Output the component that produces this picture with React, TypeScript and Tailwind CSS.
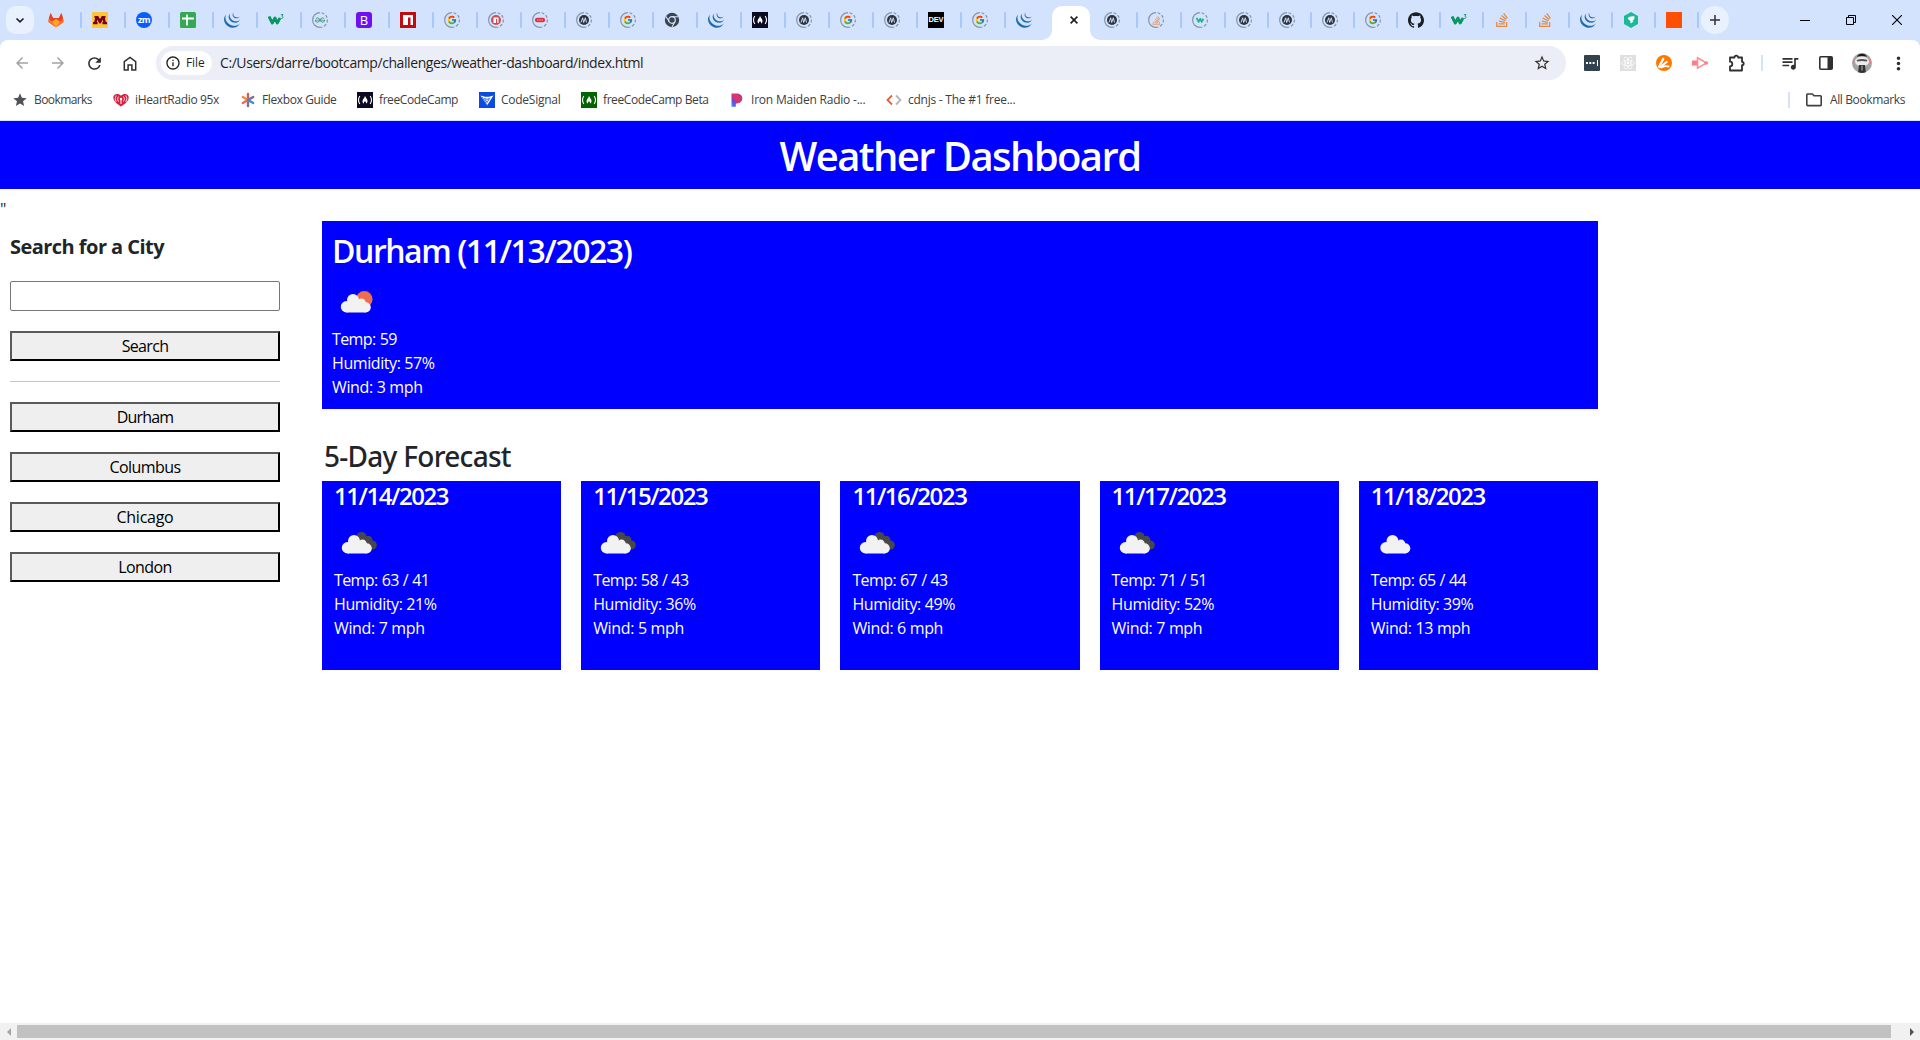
import React from 'react';
import type { ReactNode } from 'react';
import {
  SiGithub,
  SiJquery,
  SiStackoverflow,
  SiGeeksforgeeks,
  SiReact,
} from 'react-icons/si';
import { FcGoogle } from 'react-icons/fc';
import {
  MdArrowBack,
  MdArrowForward,
  MdRefresh,
  MdInfoOutline,
  MdStarBorder,
  MdStar,
  MdMoreVert,
  MdQueueMusic,
} from 'react-icons/md';

/* ---------- favicons ---------- */

const Jquery = () => <SiJquery className="size-4 text-[#1f6cae]" />;

const Gitlab = () => (
  <svg viewBox="0 0 16 16" className="size-4">
    <path d="M2.6 1 5 6h6l2.4-5 2.3 7.2c.3 1-.1 2-.8 2.6L8 15.6 1.1 10.8A2.4 2.4 0 0 1 .3 8.2Z" fill="#fc6d26" />
    <path d="M2.6 1 5 6h6l2.4-5 1.7 5.5L8 13 .9 6.5Z" fill="#e24329" />
    <path d="m4 9.8 4-3 4 3-4 5.8Z" fill="#fca326" />
  </svg>
);

const Minnesota = () => (
  <svg viewBox="0 0 16 16" className="size-4">
    <path d="M0 0h16v16H0z" fill="#fdc53a" />
    <path d="M2.5 4h3.700L8 7l1.800-3h3.700v2h-.6l.9 4h1.200v2.300h-4.600V10h.8l-.4-2.200L8.600 11.500H7.400L5.200 7.800 4.800 10h.8v2.300H1V10h1.200l.9-4h-.6Z" fill="#7a0019" />
  </svg>
);

const Zoom = () => (
  <span className="grid size-4 place-items-center rounded-full bg-[#0b5cff] pb-0.5 text-[9px] leading-none font-bold tracking-[-0.5px] text-white">
    zm
  </span>
);

const Sheets = () => (
  <svg viewBox="0 0 16 16" className="size-4">
    <rect width="16" height="16" rx="1.5" fill="#34a853" />
    <path d="M7 2.500v11M2 6.500h12" stroke="#fff" strokeWidth="1.8" />
  </svg>
);

const WMark = ({ color }: { color: string }) => (
  <path d="M1 4.500 4.300 11 7 6l2.200 5L12 6" fill="none" stroke={color} strokeWidth="2.900" strokeLinejoin="round" />
);

const W3 = () => (
  <svg viewBox="0 0 16 16" className="size-4">
    <WMark color="#059862" />
    <path d="M12.900 2.600h2.100L13.900 4.200c1.500 0 1.400 2.200-.1 2.200-.6 0-1-.2-1.200-.6" fill="none" stroke="#059862" strokeWidth=".9" />
  </svg>
);

const Bootstrap = () => (
  <span className="grid size-4 place-items-center rounded-[3px] bg-[#6f10f2] text-[13px] leading-none text-white">B</span>
);

const Npm = () => (
  <svg viewBox="0 0 16 16" className="size-4">
    <path d="M0 0h16v16H0z" fill="#c10b0f" />
    <path d="M3 3h10v10h-2.500V5.500H8V13H3Z" fill="#fff" />
  </svg>
);

const Chrome = () => (
  <svg viewBox="0 0 16 16" className="size-4">
    <circle cx="8" cy="8" r="7.200" fill="#3c4450" />
    <circle cx="8" cy="8" r="3.300" fill="#3c4450" stroke="#d3e3fd" strokeWidth="1.200" />
    <path d="M8 4.700h6.200M5.200 9.700 2 4.500M10.900 9.700 8 15" stroke="#d3e3fd" strokeWidth="1.100" />
  </svg>
);

const Fcc = ({ className }: { className: string }) => (
  <span className={className}>
    <svg viewBox="0 0 16 16" className="size-4">
      <path d="M2.800 4q-2.600 4 0 8M13.200 4q2.600 4 0 8" fill="none" stroke="#fff" strokeWidth="1.100" />
      <path d="M8 3.800c.3 1.700 2.500 2.900 2.500 5.200 0 1.400-.7 2.200-1.500 2.600.4-1.200-.3-1.600-1-2.600-.6 1-1.500 1.400-1 2.600C6 11.200 5.500 10.300 5.500 9.200 5.500 7.400 7.800 6 8 3.800Z" fill="#fff" />
    </svg>
  </span>
);

const Dev = () => (
  <span className="grid size-4 place-items-center bg-black font-['Liberation_Sans'] text-[7.5px] leading-none font-bold tracking-[-0.2px] text-white">
    DEV
  </span>
);

const Stack = () => <SiStackoverflow className="size-3.5 text-[#e08a4a]" />;

const Hex = () => (
  <svg viewBox="0 0 16 16" className="size-4">
    <path d="M8 0 15 4v8l-7 4-7-4V4Z" fill="#1cb997" />
    <path d="M4.500 6.500c1.500-2 4.500-2.500 7-2 .3 2-.5 3.500-2 4l1 1L7.700 11.500l-.4-2.500Z" fill="#fff" />
  </svg>
);

const Orange = () => <span className="block size-4 bg-[#ff4f00]" />;

const Github = () => <SiGithub className="size-4 text-[#1b1f24]" />;

/* Ring drawn around the favicon of an inactive, unloaded tab. */
const Ring = ({ children }: { children: ReactNode }) => (
  <span className="relative grid size-4 place-items-center">
    <svg viewBox="0 0 16 16" className="absolute inset-0 size-4">
      <path d="M8 .6a7.400 7.400 0 0 0 0 14.800" fill="none" stroke="#8695a8" strokeWidth="1.200" />
      <path d="M8 .6a7.400 7.400 0 0 1 0 14.800" fill="none" stroke="#8695a8" strokeWidth="1.200" strokeDasharray="3 1.800" strokeDashoffset="-1.500" />
    </svg>
    {children}
  </span>
);

const RingG = () => <Ring><FcGoogle className="size-2.5" /></Ring>;
const RingM = () => (
  <Ring>
    <svg viewBox="0 0 10 10" className="size-2.5">
      <circle cx="5" cy="5" r="5" fill="#2b3442" />
      <path d="M2 7.500 3.700 2.800l1 4.700 1.600-4.700 1.200 4.700" fill="none" stroke="#dfe8f5" strokeWidth=".9" />
    </svg>
  </Ring>
);
const RingGfg = () => <Ring><SiGeeksforgeeks className="size-2.5 text-[#3f9a72]" /></Ring>;
const RingNpm = () => (
  <Ring>
    <svg viewBox="0 0 10 10" className="size-2.5">
      <circle cx="5" cy="5" r="5" fill="#d04a55" />
      <path d="M2.500 2.500h5V8H6.200V4H5v4H2.500Z" fill="#fff" />
    </svg>
  </Ring>
);
const RingRed = () => (
  <Ring>
    <svg viewBox="0 0 10 10" className="size-2.5">
      <rect y="2.800" width="10" height="4.400" rx="2" fill="#d9343f" />
      <path d="M2 5h6" stroke="#f4a9ad" strokeWidth=".9" strokeDasharray="1.200 .4" />
    </svg>
  </Ring>
);
const RingStack = () => <Ring><SiStackoverflow className="size-[9px] text-[#ee9a66]" /></Ring>;
const RingW = () => (
  <Ring>
    <svg viewBox="0 0 13 16" className="size-2.5"><WMark color="#27b089" /></svg>
  </Ring>
);
const DarkFcc = () => <Fcc className="block size-4 bg-[#0a0a23]" />;

const leftTabs = [
  Gitlab, Minnesota, Zoom, Sheets, Jquery, W3, RingGfg, Bootstrap, Npm, RingG, RingNpm, RingRed,
  RingM, RingG, Chrome, Jquery, DarkFcc, RingM, RingG, RingM, Dev, RingG, Jquery,
];
const midTabs = [RingM, RingStack, RingW];
const rightTabs = [RingM, RingM, RingM, RingG, Github, W3, Stack, Stack, Jquery, Hex, Orange];

function Tab({ icon: Icon, narrow, last }: { icon: () => ReactNode; narrow?: boolean; last?: boolean }) {
  return (
    <div className={`flex h-10 shrink-0 items-center justify-between pl-2.5 ${narrow ? 'w-[43px]' : 'w-11'}`}>
      <span className="grid size-4 place-items-center"><Icon /></span>
      {!last && <span className="h-4 w-0.5 rounded-full bg-[#a8c7fa]" />}
    </div>
  );
}

function TabStrip() {
  return (
    <div className="flex h-10 items-center bg-[#d3e3fd]">
      <div className="ml-1.5 mr-1 grid size-7 shrink-0 place-items-center rounded-[10px] bg-[#e9f1fe]">
        <svg viewBox="0 0 10 10" className="size-2.5"><path d="m1.500 3.500 3.500 3.300 3.500-3.300" fill="none" stroke="#1f1f1f" strokeWidth="1.700" /></svg>
      </div>
      {leftTabs.map((icon, i) => <Tab key={i} icon={icon} last={i === leftTabs.length - 1} />)}
      <div className="relative flex h-10 w-11 shrink-0 items-end pl-0.5">
        <div className="flex h-[34px] w-[38px] rounded-t-[10px] bg-white pt-2.5 pl-[18px]">
          <svg viewBox="0 0 8 8" className="size-2"><path d="m.6.6 6.800 6.800M7.400.6.6 7.400" stroke="#1f1f1f" strokeWidth="1.600" /></svg>
        </div>
        <svg viewBox="0 0 10 10" className="absolute bottom-0 -left-2 size-2.5"><path d="M10 0v10H0A10 10 0 0 0 10 0Z" fill="#fff" /></svg>
        <svg viewBox="0 0 10 10" className="absolute bottom-0 left-10 size-2.5"><path d="M0 0v10h10A10 10 0 0 1 0 0Z" fill="#fff" /></svg>
      </div>
      {midTabs.map((icon, i) => <Tab key={i} icon={icon} />)}
      {rightTabs.map((icon, i) => <Tab key={i} icon={icon} narrow />)}
      <div className="ml-0.5 grid size-7 shrink-0 place-items-center rounded-full bg-[#e9f1fe]">
        <svg viewBox="0 0 10 10" className="size-2.5"><path d="M5 0v10M0 5h10" stroke="#303030" strokeWidth="1.500" /></svg>
      </div>
      <div className="flex flex-1 items-center justify-end gap-9 pr-[18px]">
        <svg viewBox="0 0 10 10" className="size-2.5"><path d="M0 5.500h10" stroke="#000" /></svg>
        <svg viewBox="0 0 10 10" className="size-2.5"><path d="M.5 2.500h7v7h-7zM2.500 2.500v-2h7v7h-2" fill="none" stroke="#000" /></svg>
        <svg viewBox="0 0 10 10" className="size-2.5"><path d="m0 0 10 10M10 0 0 10" stroke="#000" strokeWidth="1.100" /></svg>
      </div>
    </div>
  );
}

function Slot({ children, className = 'w-9' }: { children: ReactNode; className?: string }) {
  return <span className={`grid shrink-0 place-items-center ${className}`}>{children}</span>;
}

function Toolbar() {
  return (
    <div className="bg-[#d3e3fd]">
      <div className="flex h-[46px] items-center rounded-t-lg bg-white text-[#3c4043]">
        <div className="flex w-[156px] items-center pl-1">
          <Slot><MdArrowBack className="size-[18px] text-[#a3a3a3]" /></Slot>
          <Slot><MdArrowForward className="size-[18px] text-[#a3a3a3]" /></Slot>
          <Slot><MdRefresh className="size-[19px] text-[#303030]" /></Slot>
          <Slot>
            <svg viewBox="0 0 14 15" className="h-[15px] w-3.5"><path d="M1.300 5.600 7 1.400l5.700 4.200V14H8.900V9H5.100v5H1.300Z" fill="none" stroke="#303030" strokeWidth="1.500" /></svg>
          </Slot>
        </div>
        <div className="flex h-[34px] w-[1410px] items-center rounded-full bg-[#ebeef7] pl-[5px]">
          <div className="flex h-6 w-[51px] items-center rounded-full bg-white pl-1 text-xs text-[#1f1f1f]">
            <MdInfoOutline className="size-4 shrink-0" />
            <span className="ml-[5px] tracking-[-0.1px]">File</span>
          </div>
          <span className="ml-2 flex-1 text-sm tracking-[-0.42px] text-[#1f1f1f]">
            C:/Users/darre/bootcamp/challenges/weather-dashboard/index.html
          </span>
          <MdStarBorder className="mr-[15px] size-[18px] text-[#303030]" />
        </div>
        <div className="flex flex-1 items-center pl-2">
          <Slot>
            <svg viewBox="0 0 16 16" className="size-4"><rect width="16" height="16" rx="1" fill="#32424f" /><path d="M2 8h9" stroke="#fff" strokeWidth="2" strokeDasharray="2 1.300" /><path d="M13.500 5v6" stroke="#fff" strokeWidth="1" /></svg>
          </Slot>
          <Slot><span className="grid size-4 place-items-center bg-[#dfdfdf]"><SiReact className="size-3.5 text-white" /></span></Slot>
          <Slot>
            <svg viewBox="0 0 16 16" className="size-4">
              <circle cx="8" cy="8" r="8" fill="#ff7800" />
              <g stroke="#fff" strokeLinecap="round" fill="none">
                <path d="M3.200 11.800 7.200 4" strokeWidth="2.400" />
                <path d="M4.500 12 10.600 7" strokeWidth="2.200" />
                <path d="M5.500 12.300q4-1.800 7-.8" strokeWidth="1.900" />
              </g>
            </svg>
          </Slot>
          <Slot>
            <svg viewBox="0 0 16 14" className="h-3.5 w-4"><path d="M0 4.500h5v5H0z" fill="#ff7b85" /><path d="M5.500 1.800 14.500 7l-9 5.200Z" fill="none" stroke="#ff8d95" strokeWidth="1.600" /><circle cx="14.200" cy="7" r="1.800" fill="#ff7b85" /></svg>
          </Slot>
          <Slot className="w-[38px]">
            <svg viewBox="0 0 18 18" className="size-[18px]"><path d="M2 3.500h4.500a1.800 1.800 0 0 1 3.600 0H14v4.300a1.700 1.700 0 0 1 0 3.400v5.300H2v-4.200a2.300 2.300 0 0 0 0-4.600Z" fill="none" stroke="#303030" strokeWidth="1.800" strokeLinejoin="round" /></svg>
          </Slot>
          <span className="ml-[5px] mr-[9px] h-4 w-0.5 bg-[#d3e3fd]" />
          <Slot><MdQueueMusic className="size-5 text-[#303030]" /></Slot>
          <Slot>
            <svg viewBox="0 0 14 14" className="size-3.5"><rect x=".8" y=".8" width="12.400" height="12.400" rx="1" fill="none" stroke="#303030" strokeWidth="1.600" /><path d="M8.500 1H13v12H8.500Z" fill="#303030" /></svg>
          </Slot>
          <Slot>
            <svg viewBox="0 0 20 20" className="size-5">
              <circle cx="10" cy="10" r="10" fill="#a3a3a3" />
              <ellipse cx="10" cy="8.500" rx="7" ry="5" fill="#ececec" />
              <path d="M5 3.800Q6.500.6 10 .8q3.500-.2 5 3-5-1.400-10 0Z" fill="#1a1a1a" />
              <path d="M4.500 7q5.500-1.800 11 0l-.8 1.500q-4.700-1-9.400 0Z" fill="#555" />
              <path d="M1.800 6.500q-.8 2 0 4M18.200 6.500q.8 2 0 4" fill="none" stroke="#f27b86" strokeWidth="1.300" />
              <path d="M7 12h6l.8 7.200a10 10 0 0 1-7.600 0Z" fill="#333" />
              <path d="M10 12.500v5" stroke="#bbb" />
            </svg>
          </Slot>
          <Slot><MdMoreVert className="size-[21px] text-[#303030]" /></Slot>
        </div>
      </div>
    </div>
  );
}

/* ---------- bookmarks ---------- */

const Heart = () => (
  <svg viewBox="0 0 16 16" className="size-4">
    <path d="M8 14.500C4 12 .3 9 .3 5.500.3 1.500 5.500.8 8 3.800c2.500-3 7.700-2.300 7.700 1.700 0 3.500-3.700 6.500-7.700 9Z" fill="#d6203f" />
    <path d="M5.500 4.500Q3.500 7 5.500 9.500M3.200 3.500Q1 6.500 3.200 10M10.500 4.500Q12.500 7 10.500 9.500M12.800 3.500q2.200 3 0 6.500" fill="none" stroke="#fff" strokeWidth=".8" />
    <circle cx="8" cy="7" r="1.200" fill="#fff" /><path d="M8 8v4" stroke="#fff" strokeWidth="1" />
  </svg>
);
const Asterisk = () => (
  <svg viewBox="0 0 16 16" className="size-4" fill="none" strokeWidth="2.400" strokeLinecap="round">
    <path d="M8 2v6" stroke="#e0574f" /><path d="M8 8v6" stroke="#8a6a86" />
    <path d="M8 8 2.800 5" stroke="#f08a4b" /><path d="m8 8 5.200-3" stroke="#7b6d9a" />
    <path d="m8 8-5.200 3" stroke="#ee6b4d" /><path d="m8 8 5.200 3" stroke="#3f8fc4" />
  </svg>
);
const CodeSignal = () => (
  <svg viewBox="0 0 16 16" className="size-4">
    <path d="M0 0h16v16H0z" fill="#0a4be0" />
    <path d="M1.500 3.500 6 4.800h4l4.500-1.300L8 13.500Z" fill="#fff" /><path d="m5.500 6.500 2.500.8 2.500-.8L8 10.500ZM3 5l5 8" fill="none" stroke="#0a4be0" strokeWidth=".8" />
  </svg>
);
const Pandora = () => (
  <svg viewBox="0 0 16 16" className="size-4">
    <defs><linearGradient id="pandora" x1="0" y1="1" x2="1" y2="0"><stop offset="0" stopColor="#2b9bf0" /><stop offset=".3" stopColor="#6a4bd8" /><stop offset=".5" stopColor="#e8305f" /><stop offset=".7" stopColor="#d8356f" /><stop offset="1" stopColor="#5b3df0" /></linearGradient></defs>
    <path d="M2.500 1.500H7.500c8 0 7.500 9.900.5 9.900H6.800v3.400H2.500Z" fill="url(#pandora)" />
  </svg>
);
const Cdnjs = () => (
  <svg viewBox="0 0 16 16" className="size-4" fill="none" strokeWidth="1.800"><path d="M6 3.500 1.500 8 6 12.500" stroke="#e2603b" /><path d="m10 3.500 4.500 4.500-4.500 4.500" stroke="#b5b5b5" /></svg>
);
const GreenFcc = () => <Fcc className="block size-4 bg-[#006400]" />;
const BookmarkStar = () => <MdStar className="size-4 text-[#4f5357]" />;

const bookmarks: { label: string; icon: () => ReactNode; cls: string }[] = [
  { label: 'Bookmarks', icon: BookmarkStar, cls: 'w-[101px] tracking-[-0.58px]' },
  { label: 'iHeartRadio 95x', icon: Heart, cls: 'w-[127px] tracking-[-0.35px]' },
  { label: 'Flexbox Guide', icon: Asterisk, cls: 'w-[117px] tracking-[-0.38px]' },
  { label: 'freeCodeCamp', icon: DarkFcc, cls: 'w-[122px] tracking-[-0.41px]' },
  { label: 'CodeSignal', icon: CodeSignal, cls: 'w-[102px] tracking-[-0.25px]' },
  { label: 'freeCodeCamp Beta', icon: GreenFcc, cls: 'w-[148px] tracking-[-0.41px]' },
  { label: 'Iron Maiden Radio -...', icon: Pandora, cls: 'w-[157px] tracking-[-0.21px]' },
  { label: 'cdnjs - The #1 free...', icon: Cdnjs, cls: 'w-[140px] tracking-[-0.24px]' },
];

function BookmarksBar() {
  return (
    <div className="flex h-[35px] items-center border-b border-[#d3e3fd] bg-white pb-1 pl-3 text-xs text-[#3c4043]">
      {bookmarks.map(({ label, icon: Icon, cls }) => (
        <div key={label} className={`flex shrink-0 -translate-y-px items-center gap-1.5 whitespace-nowrap ${cls}`}>
          <Icon />
          <span>{label}</span>
        </div>
      ))}
      <div className="ml-auto flex -translate-y-px items-center pr-[15px] tracking-[-0.38px]">
        <span className="mr-4 h-4 w-0.5 bg-[#d3e3fd]" />
        <svg viewBox="0 0 16 14" className="mr-2 h-3.5 w-4"><path d="M1.500 1h4.800L8 2.800h6.500a.7.7 0 0 1 .7.7v8.300a.8.800 0 0 1-.8.800H1.500a.8.8 0 0 1-.7-.8V1.800c0-.4.3-.8.7-.8Z" fill="none" stroke="#3c4043" strokeWidth="1.600" /></svg>
        <span>All Bookmarks</span>
      </div>
    </div>
  );
}

/* ---------- weather page ---------- */

type Sky = 'sun' | 'broken' | 'cloud';

function WeatherIcon({ sky }: { sky: Sky }) {
  return (
    <svg viewBox={sky === 'cloud' ? '-0.5 0 50 50' : sky === 'broken' ? '1 0 50 50' : '0 0 50 50'} className="block size-[50px]">
      {sky === 'sun' && <circle cx="32.300" cy="22.300" r="8.300" fill="#ec6e4c" />}
      {sky === 'broken' && (
        <g fill="#484848">
          <circle cx="28.500" cy="18.800" r="4.900" /><circle cx="35" cy="22.300" r="4.500" />
          <circle cx="39.300" cy="27" r="4.500" /><path d="M26 20h10l3 11h-9Z" />
        </g>
      )}
      <g fill="#f2f2f2">
        <circle cx="14.500" cy="29.700" r="5.700" /><circle cx="21" cy="23" r="6" />
        <circle cx="29.500" cy="26" r="4.400" /><circle cx="33.700" cy="30.300" r="5.100" />
        <path d="M14.500 25 19 24h10l4.700 3v8.400H14.500Z" />
      </g>
    </svg>
  );
}

const forecast: { date: string; sky: Sky; temp: string; humidity: string; wind: string }[] = [
  { date: '11/14/2023', sky: 'broken', temp: '63 / 41', humidity: '21%', wind: '7 mph' },
  { date: '11/15/2023', sky: 'broken', temp: '58 / 43', humidity: '36%', wind: '5 mph' },
  { date: '11/16/2023', sky: 'broken', temp: '67 / 43', humidity: '49%', wind: '6 mph' },
  { date: '11/17/2023', sky: 'broken', temp: '71 / 51', humidity: '52%', wind: '7 mph' },
  { date: '11/18/2023', sky: 'cloud', temp: '65 / 44', humidity: '39%', wind: '13 mph' },
];

function Readings({ temp, humidity, wind }: { temp: string; humidity: string; wind: string }) {
  return (
    <div className="text-base leading-6">
      <p className="tracking-[-0.6px] [word-spacing:0.5px]">Temp: {temp}</p>
      <p className="tracking-[-0.41px]">Humidity: {humidity}</p>
      <p className="tracking-[-0.35px]">Wind: {wind}</p>
    </div>
  );
}

function CityButton({ children, className }: { children: ReactNode; className: string }) {
  return (
    <button className={`block h-[30px] w-full border-2 border-t-[#5a5a5a] border-r-black border-b-black border-l-[#5a5a5a] bg-[#efefef] text-center text-base leading-6 text-black ${className}`}>
      {children}
    </button>
  );
}

export default function App() {
  return (
    <div className="flex h-[1040px] w-full flex-col overflow-hidden bg-white font-['Open_Sans','Noto_Sans',sans-serif]">
      <TabStrip />
      <Toolbar />
      <BookmarksBar />

      <header className="h-[68px] shrink-0 bg-[#0000ff] pt-[11px] text-center text-[40px] leading-[48px] font-semibold tracking-[-1.6px] text-white">
        <h1>Weather Dashboard</h1>
      </header>

      <main className="flex-1 text-[#212529]">
        <p className="h-8 pt-2 text-base leading-6 tracking-[-0.4px]">"</p>
        <div className="flex">
          <aside className="w-[280px] pt-3.5 pl-2.5">
            <h2 className="text-xl leading-6 font-bold tracking-[-0.54px]">Search for a City</h2>
            <input className="mt-[22px] block h-[30px] w-full rounded-[2px] border border-[#767676] bg-white px-2 outline-none" />
            <div className="mt-5"><CityButton className="tracking-[-0.69px]">Search</CityButton></div>
            <hr className="mt-5 mb-5 border-t border-[#c4c5c6]" />
            <div className="flex flex-col gap-5">
              <CityButton className="tracking-[-0.85px]">Durham</CityButton>
              <CityButton className="tracking-[-0.57px]">Columbus</CityButton>
              <CityButton className="tracking-[-0.26px]">Chicago</CityButton>
              <CityButton className="tracking-[-0.6px]">London</CityButton>
            </div>
          </aside>

          <section className="ml-[42px] w-[1276px]">
            <div className="h-[188px] bg-[#0000ff] px-2.5 pt-[11px] text-white">
              <h2 className="mb-[7px] text-[32px] leading-[38px] font-semibold tracking-[-1.45px]">Durham (11/13/2023)</h2>
              <WeatherIcon sky="sun" />
              <Readings temp="59" humidity="57%" wind="3 mph" />
            </div>
            <h3 className="mt-[30px] mb-2 pl-0.5 font-['Noto_Sans',sans-serif] text-[28px] leading-[34px] font-medium tracking-[-0.72px]">5-Day Forecast</h3>
            <div className="grid grid-cols-5 gap-5">
              {forecast.map((day) => (
                <div key={day.date} className="h-[189px] bg-[#0000ff] px-3 text-white">
                  <h4 className="mb-2 text-2xl leading-[29px] font-semibold tracking-[-1.45px]">{day.date}</h4>
                  <WeatherIcon sky={day.sky} />
                  <Readings temp={day.temp} humidity={day.humidity} wind={day.wind} />
                </div>
              ))}
            </div>
          </section>
        </div>
      </main>

      <footer className="flex h-[17px] shrink-0 items-center bg-[#f1f1f1]">
        <span className="grid w-[17px] place-items-center"><svg viewBox="0 0 4 8" className="h-2 w-1"><path d="M4 0v8L0 4Z" fill="#a3a3a3" /></svg></span>
        <span className="h-[13px] w-[1874px] bg-[#c1c1c1]" />
        <span className="ml-auto grid w-[17px] place-items-center"><svg viewBox="0 0 4 8" className="h-2 w-1"><path d="M0 0v8l4-4Z" fill="#505050" /></svg></span>
      </footer>
    </div>
  );
}
